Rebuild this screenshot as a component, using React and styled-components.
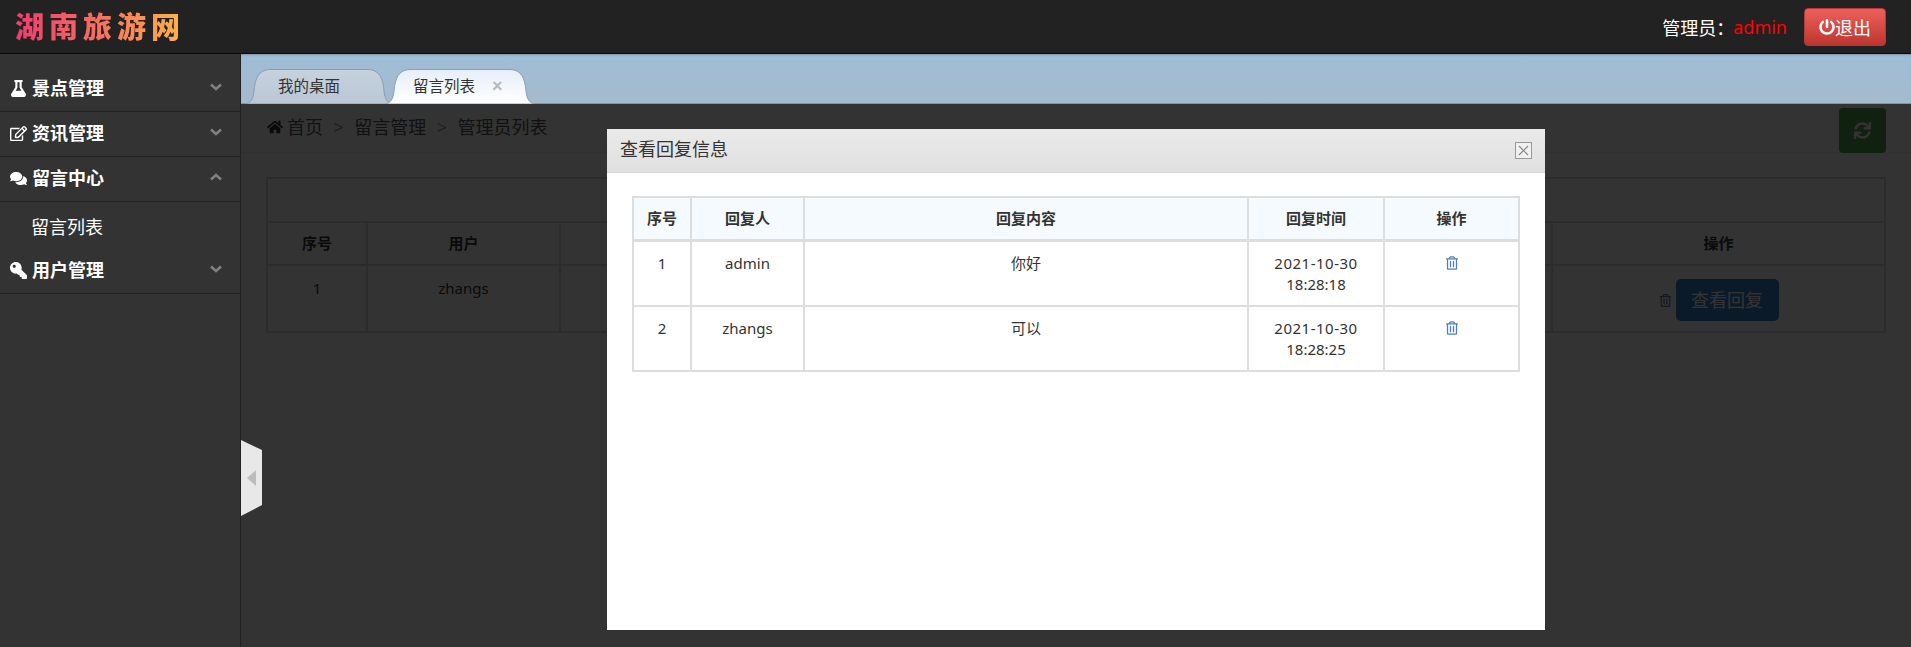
import React from "react";
import styled, { createGlobalStyle } from "styled-components";
import { FaFlask, FaRegEdit, FaComments, FaKey, FaHome, FaSync, FaRegTrashAlt, FaPowerOff } from "react-icons/fa";

const Global = createGlobalStyle`
  html, body { margin: 0; padding: 0; height: 100%; overflow: hidden; background: #fff; }
  body { font-family: "Noto Sans", "Noto Sans CJK SC", sans-serif; color: #333; }
  * { box-sizing: border-box; }
`;

const Page = styled.div`
  height: 647px; display: flex; flex-direction: column; overflow: hidden;
`;
const Header = styled.header`
  height: 54px; flex: none; background: #222; border-bottom: 1px solid #0a0a0a;
  display: flex; align-items: center; justify-content: space-between; padding: 0 25px 0 15px;
`;
const Logo = styled.div`
  font-family: "Noto Sans CJK SC", sans-serif; font-weight: 900; font-size: 29px; letter-spacing: 5px; line-height: 36px;
  margin-top: -4px; white-space: nowrap;
  background: linear-gradient(90deg, #f23a70 0%, #f76a60 45%, #ffb44a 100%);
  -webkit-background-clip: text; background-clip: text; color: transparent;
`;
const UserBar = styled.div`display: flex; align-items: center; gap: 0; color: #fff; font-size: 18px;`;
const AdminName = styled.span`color: #f00; margin: 0 17px 0 -1px;`;
const Logout = styled.button`
  width: 82px; height: 38px; border: 1px solid #b33a36; border-radius: 4px; margin-top: 1px;
  background: linear-gradient(#ee5f5b, #bd362f); color: #fff; font: inherit; font-size: 18px; padding: 0;
  display: flex; align-items: center; justify-content: center; gap: 0;
  svg { width: 16px; height: 16px; }
`;
const Main = styled.div`flex: 1; display: flex; min-height: 0;`;
const Sidebar = styled.nav`
  width: 241px; flex: none; background: #333; border-right: 1px solid #222; padding-top: 13px;
`;
const NavRow = styled.div`
  height: 45px; border-bottom: 1px solid #222; display: flex; align-items: center; padding: 0 18px 1px 10px;
  color: #fff; font-size: 18px; font-weight: 700;
`;
const NavIcon = styled.span`
  width: 22px; display: flex; align-items: center; svg { width: 17px; height: 17px; }
`;
const KeyIcon = styled(FaKey)`transform: scaleX(-1);`;
const NavLabel = styled.span`flex: 1; line-height: 24px; margin-top: -1px;`;
const ChevronSvg = styled.svg`width: 12px; height: 8px; display: block; margin-top: -3px;`;
const Chevron = ({ up }) => (
  <ChevronSvg viewBox="0 0 12 8">
    <path d={up ? "M1 6.5 L6 2 L11 6.5" : "M1 1.5 L6 6 L11 1.5"} fill="none" stroke="#808080" strokeWidth="2.6" />
  </ChevronSvg>
);
const SubItem = styled.div`
  height: 47px; padding-left: 31px; display: flex; align-items: center; color: #fff; font-size: 18px;
`;
const Content = styled.div`flex: 1; min-width: 0; position: relative; display: flex; flex-direction: column;`;
const TabBar = styled.div`
  height: 50px; flex: none; display: flex; align-items: flex-end; padding-left: 4px;
  background: linear-gradient(#9fbdd6, #a5bacd); border-bottom: 1px solid #7f95aa;
  box-shadow: inset 0 2px 2px -1px #7f95aa;
`;
const TabWrap = styled.div`
  position: relative; height: 35px; margin-bottom: -1px; display: flex; align-items: center;
  width: ${p => p.$w}px; margin-left: ${p => p.$ml || 0}px; z-index: ${p => p.$active ? 2 : 1};
  padding-left: ${p => p.$pl}px; font-size: 15.5px; color: #333;
`;
const TabShape = styled.svg`position: absolute; inset: 0; width: 100%; height: 100%;`;
const TabText = styled.span`position: relative; line-height: 20px; margin-top: -2px;`;
const TabClose = styled.span`
  position: relative; color: #b5b9bd; font-weight: 700; font-size: 18px; margin-left: 17px; margin-top: -2px;
  font-family: "Liberation Sans", sans-serif; line-height: 20px;
`;
const Tab = ({ w, ml, pl, active, id, children }) => (
  <TabWrap $w={w} $ml={ml} $pl={pl} $active={active}>
    <TabShape viewBox={`0 0 ${w} 35`} preserveAspectRatio="none">
      <defs>
        <linearGradient id={id} x1="0" x2="0" y1="0" y2="1">
          <stop offset="0" stopColor={active ? "#e6eef8" : "#c6d2de"} />
          <stop offset="1" stopColor={active ? "#ffffff" : "#b9c7d5"} />
        </linearGradient>
      </defs>
      <path
        d={`M0.5 35 C5 34 8 31 9 22 C10 9 14 0.5 25 0.5 H${w - 25} C${w - 14} 0.5 ${w - 10} 9 ${w - 9} 22 C${w - 8} 31 ${w - 5} 34 ${w - 0.5} 35 Z`}
        fill={`url(#${id})`} stroke="#8a9db2" strokeWidth="1"
      />
    </TabShape>
    {children}
  </TabWrap>
);
const Body = styled.div`flex: 1; position: relative; background: #fff; min-height: 0;`;
const CrumbBar = styled.div`
  height: 49px; border-bottom: 1px solid #eee; display: flex; align-items: flex-start; justify-content: space-between;
  padding: 0 25px 0 26px;
`;
const Crumbs = styled.div`
  display: flex; align-items: center; height: 46px; font-size: 18px; color: #555; line-height: 24px;
  svg { width: 16px; height: 16px; margin-right: 4px; color: #333; }
`;
const Sep = styled.span`color: #999; margin: 0 10.5px;`;
const RefreshBtn = styled.div`
  width: 47px; height: 45px; margin-top: 4px; border-radius: 4px; background: #51a351; color: #fff;
  display: flex; align-items: center; justify-content: center; svg { width: 17px; height: 17px; }
`;
const BgSection = styled.div`padding: 24px 25px 0;`;
const TableTitle = styled.div`height: 44px; border: 2px solid #ddd; border-bottom: none;`;
const BgTable = styled.table`
  width: 100%; border-collapse: collapse; table-layout: fixed; font-size: 15px; line-height: 21px;
  th, td { border: 2px solid #ddd; text-align: center; padding: 0 8px; }
  th { height: 43px; font-weight: 700; }
  td { height: 67px; vertical-align: top; padding-top: 12px; }
`;
const ActionCell = styled.td`
  && { padding-top: 13px; }
`;
const DetailBtn = styled.span`
  display: inline-flex; align-items: center; justify-content: center; width: 103px; height: 42px;
  border-radius: 5px; background: #3282c8; color: #fff; font-size: 18px; margin-left: 4px; vertical-align: middle;
`;
const BgTrash = styled(FaRegTrashAlt)`width: 13px; height: 13px; color: #5a7fb5; vertical-align: middle;`;
const Overlay = styled.div`
  position: absolute; inset: 0; background: rgba(0,0,0,.8); display: flex; justify-content: center; align-items: flex-start;
  padding-top: 25px;
`;
const Modal = styled.div`width: 938px; height: 501px; background: #fff;`;
const ModalHead = styled.div`
  height: 44px; padding: 0 13px 0 13px; display: flex; align-items: center; justify-content: space-between;
  background: linear-gradient(#eaeaea, #e0e0e0); border-bottom: 1px solid #d5d5d5;
`;
const ModalTitle = styled.div`font-size: 18px; color: #333; line-height: 24px; margin-top: -3px;`;
const CloseBox = styled.svg`width: 17px; height: 17px; display: block; margin-top: -1px;`;
const ModalBody = styled.div`padding: 23px 25px 0;`;
const ReplyTable = styled.table`
  width: 886px; border-collapse: collapse; table-layout: fixed; font-size: 15px; line-height: 21px; color: #333;
  th, td { border: 2px solid #ddd; text-align: center; vertical-align: top; padding: 11px 6px 9px; }
  th { background: #f5fafe; font-weight: 700; padding: 10px 6px 10px; height: 43px; border-bottom-width: 3px; }
  td { height: 65px; }
`;
const DateLine = styled.span`letter-spacing: .5px;`;
const TrashBtn = styled(FaRegTrashAlt)`width: 12px; height: 14px; color: #4f7fbb; vertical-align: -1px;`;
const Handle = styled.div`
  position: absolute; left: 0; top: 386px; width: 21px; height: 76px; background: #e8e8e8; z-index: 5;
  clip-path: polygon(0 0, 100% 10px, 100% 65px, 0 100%); display: flex; align-items: center; padding-left: 6px;
`;
const HandleArrow = styled.i`
  display: block; width: 0; height: 0; border-style: solid; border-width: 8px 9px 8px 0;
  border-color: transparent #bcbcbc transparent transparent;
`;

const nav = (icon, label, up) => (
  <NavRow>
    <NavIcon>{icon}</NavIcon>
    <NavLabel>{label}</NavLabel>
    <Chevron up={up} />
  </NavRow>
);

const replies = [
  { id: 1, who: "admin", text: "你好", date: "2021-10-30", time: "18:28:18" },
  { id: 2, who: "zhangs", text: "可以", date: "2021-10-30", time: "18:28:25" },
];

export default function App() {
  return (
    <Page>
      <Global />
      <Header>
        <Logo>湖南旅游网</Logo>
        <UserBar>
          管理员：<AdminName>admin</AdminName>
          <Logout><FaPowerOff />退出</Logout>
        </UserBar>
      </Header>
      <Main>
        <Sidebar>
          {nav(<FaFlask />, "景点管理")}
          {nav(<FaRegEdit />, "资讯管理")}
          {nav(<FaComments />, "留言中心", true)}
          <SubItem>留言列表</SubItem>
          {nav(<KeyIcon />, "用户管理")}
        </Sidebar>
        <Content>
          <Handle><HandleArrow /></Handle>
          <TabBar>
            <Tab w={148} id="t1" pl={33}><TabText>我的桌面</TabText></Tab>
            <Tab w={150} ml={-8} id="t2" pl={28} active><TabText>留言列表</TabText><TabClose>×</TabClose></Tab>
          </TabBar>
          <Body>
            <CrumbBar>
              <Crumbs><FaHome />首页<Sep>&gt;</Sep>留言管理<Sep>&gt;</Sep>管理员列表</Crumbs>
              <RefreshBtn><FaSync /></RefreshBtn>
            </CrumbBar>
            <BgSection>
              <TableTitle />
              <BgTable>
                <colgroup>
                  <col width="100" /><col width="193" /><col /><col width="333" />
                </colgroup>
                <thead>
                  <tr><th>序号</th><th>用户</th><th>留言内容</th><th>操作</th></tr>
                </thead>
                <tbody>
                  <tr>
                    <td>1</td><td>zhangs</td><td></td>
                    <ActionCell><BgTrash /><DetailBtn>查看回复</DetailBtn></ActionCell>
                  </tr>
                </tbody>
              </BgTable>
            </BgSection>
            <Overlay>
              <Modal>
                <ModalHead>
                  <ModalTitle>查看回复信息</ModalTitle>
                  <CloseBox viewBox="0 0 17 17">
                    <rect x="0.5" y="0.5" width="16" height="16" fill="#f0f0f0" stroke="#999" />
                    <path d="M4 4 L13 13 M13 4 L4 13" stroke="#888" strokeWidth="1.2" />
                  </CloseBox>
                </ModalHead>
                <ModalBody>
                  <ReplyTable>
                    <colgroup>
                      <col width="58" /><col width="113" /><col width="444" /><col width="136" /><col width="135" />
                    </colgroup>
                    <thead>
                      <tr><th>序号</th><th>回复人</th><th>回复内容</th><th>回复时间</th><th>操作</th></tr>
                    </thead>
                    <tbody>
                      {replies.map(r => (
                        <tr key={r.id}>
                          <td>{r.id}</td>
                          <td>{r.who}</td>
                          <td>{r.text}</td>
                          <td><DateLine>{r.date}</DateLine><br />{r.time}</td>
                          <td><TrashBtn /></td>
                        </tr>
                      ))}
                    </tbody>
                  </ReplyTable>
                </ModalBody>
              </Modal>
            </Overlay>
          </Body>
        </Content>
      </Main>
    </Page>
  );
}
